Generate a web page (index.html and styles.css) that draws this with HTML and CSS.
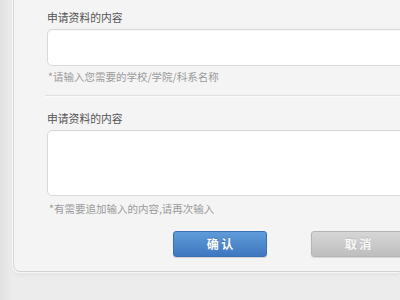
FILE: index.html
```html
<!DOCTYPE html>
<html lang="zh-CN">
<head>
<meta charset="utf-8">
<title>申请资料</title>
<link rel="stylesheet" href="styles.css">
</head>
<body>
<div class="panel">
  <div class="field">
    <div class="label">申请资料的内容</div>
    <div class="input"></div>
    <div class="hint">*请输入您需要的学校/学院/科系名称</div>
  </div>
  <div class="divider"></div>
  <div class="field field-2">
    <div class="label">申请资料的内容</div>
    <div class="textarea"></div>
    <div class="hint hint-2">*有需要追加输入的内容,请再次输入</div>
  </div>
  <div class="actions">
    <div class="btn btn-ok">确 认</div>
    <div class="btn btn-cancel">取 消</div>
  </div>
</div>
</body>
</html>
```
FILE: styles.css
```css
html, body {
  margin: 0;
  padding: 0;
  width: 400px;
  height: 300px;
  overflow: hidden;
}
body {
  background: linear-gradient(to right, #e2e2e2 0px, #ececec 12px, #ececec 100%);
  font-family: "Noto Sans CJK SC", "Noto Sans", sans-serif;
}
.panel {
  margin-left: 13px;
  overflow: hidden;
  background: #f4f4f4;
  border-left: 1px solid #d7d7d7;
  border-bottom: 1px solid #d2d2d2;
  border-bottom-left-radius: 7px;
  box-shadow: -1px 1px 0 #f8f8f8, 0 3px 4px rgba(0,0,0,0.04);
  padding: 0 0 14px 33px;
}
.label {
  margin-top: 9px;
  margin-bottom: 4px;
  height: 16px;
  line-height: 17px;
  font-size: 10.8px;
  color: #555;
}
.input, .textarea {
  width: 400px;
  height: 37px;
  box-sizing: border-box;
  background: #fff;
  border: 1px solid #d8d8d8;
  border-radius: 5px;
  box-shadow: inset 0 1px 1px rgba(0,0,0,0.03);
}
.textarea {
  height: 66px;
}
.hint {
  margin-top: 4px;
  height: 14px;
  line-height: 14px;
  font-size: 10.5px;
  color: #9a9a9a;
  padding-left: 1px;
}
.divider {
  margin-top: 11px;
  margin-left: -2px;
  height: 1px;
  background: #e0e0e0;
  box-shadow: 0 1px 0 #fbfbfb;
}
.field-2 .label {
  margin-top: 14px;
}
.hint-2 {
  margin-top: 6px;
  padding-left: 2px;
}
.actions {
  display: flex;
  gap: 44px;
  margin-top: 15px;
  padding-left: 126px;
}
.btn {
  flex: none;
  width: 94px;
  height: 26px;
  box-sizing: border-box;
  border-radius: 3px;
  text-align: center;
  line-height: 24px;
  font-size: 12px;
  font-weight: bold;
  color: #fff;
}
.btn-ok {
  background: linear-gradient(to bottom, #5f9bd9, #3f77c0);
  border: 1px solid #3b70b4;
  text-shadow: 0 -1px 0 rgba(0,0,0,0.2);
  box-shadow: 0 1px 1px rgba(0,0,0,0.15);
}
.btn-cancel {
  background: linear-gradient(to bottom, #d6d6d6, #bebebe);
  border: 1px solid #b4b4b4;
  color: #f8f8f8;
  text-shadow: 0 -1px 0 rgba(0,0,0,0.15);
  box-shadow: 0 1px 1px rgba(0,0,0,0.12);
}
```
